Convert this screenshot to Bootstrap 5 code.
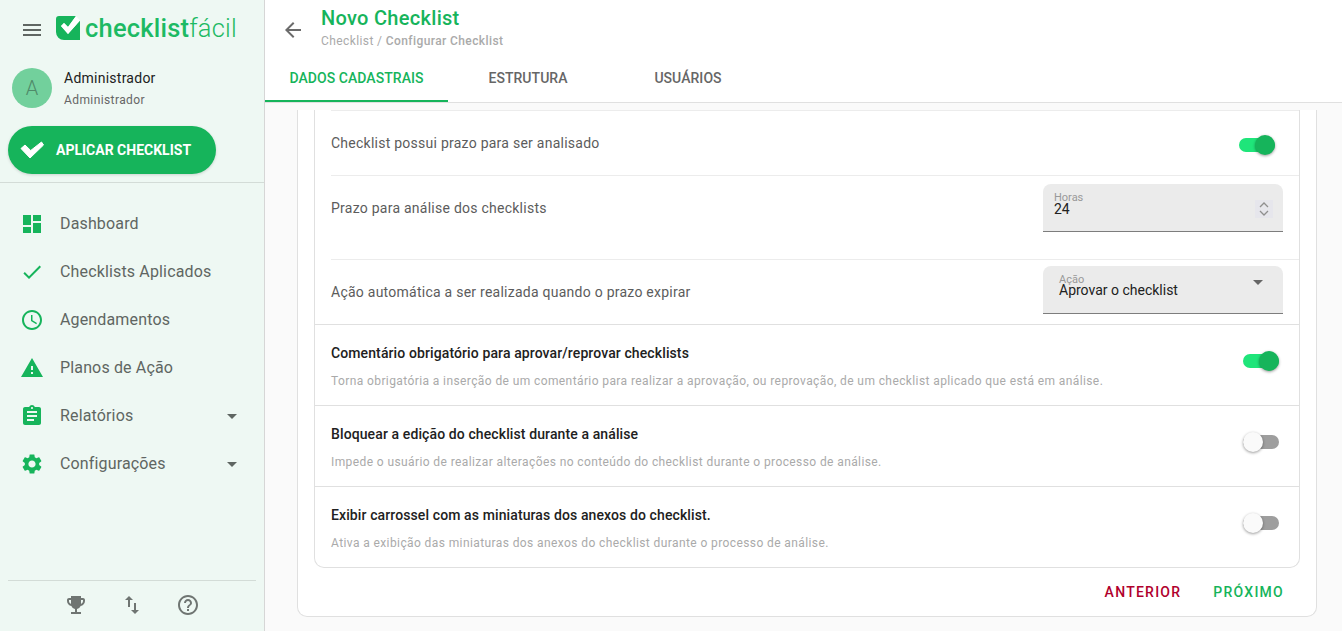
<!DOCTYPE html>
<html lang="pt-BR">
<head>
    <meta charset="UTF-8">
    <meta name="viewport" content="width=device-width, initial-scale=1.0">
    <title>Novo Checklist</title>
    <link href="https://cdn.jsdelivr.net/npm/bootstrap@5.3.0/dist/css/bootstrap.min.css" rel="stylesheet">
    <style>
        html, body { height: 100%; }
        body { font-family: Roboto, "Liberation Sans", sans-serif; background: #fafafa; color: #212121; overflow: hidden; }
        svg { fill: currentColor; flex-shrink: 0; display: block; }

        .app-shell { height: 631px; }
        .side-panel { width: 265px; background: #eef8f3; border-right: 1px solid #d6d6d6; }
        .side-top { height: 60px; padding: 0 0 0 20px; gap: 12px; color: #5f6662; }
        .brand-icon { color: #16b45b; margin-bottom: 4px; }
        .brand-name { font-size: 25.5px; line-height: 30px; color: #1dba63; font-weight: 500; letter-spacing: .2px; margin-left: -7px; margin-bottom: 4px; }
        .brand-name span { font-weight: 300; }
        .user-box { padding: 8px 12px 0; gap: 12px; height: 58px; }
        .user-pic { width: 40px; height: 40px; border-radius: 50%; background: #72d09c; color: #4f8a69; font-size: 20px; font-weight: 300; }
        .user-name { font-size: 14px; line-height: 20px; letter-spacing: .25px; }
        .user-role { font-size: 12px; line-height: 16px; letter-spacing: .4px; color: #666; margin-top: 4px; }
        .apply-btn { width: 208px; height: 48px; margin: 8px 0 8px 8px; border-radius: 24px; background: #16b45b; color: #fff; border: 0; font-size: 14px; font-weight: 700; gap: 12px; padding: 0 0 0 12px; box-shadow: 0 1px 3px rgba(0,0,0,.15); letter-spacing: 0; }
        .apply-btn:hover { background: #16b45b; color: #fff; }
        .side-sep { border-top: 1px solid #d3dcd7; }
        .side-menu { padding-top: 17px; }
        .side-menu .nav-link { height: 48px; padding: 0 20px 0 20px; gap: 16px; color: #5f6662; font-size: 16px; letter-spacing: .15px; }
        .side-menu svg { color: #16b45b; }
        .side-menu svg.menu-caret { color: #5f6662; margin-left: auto; }
        .side-foot { margin: 0 8px; height: 51px; border-top: 1px solid #d3dcd7; color: #6f7572; padding-top: 12px; gap: 32px; }

        .top-area { background: #fff; height: 103px; border-bottom: 1px solid #e0e0e0; }
        .title-bar { height: 60px; }
        .back-link { width: 56px; padding-left: 16px; color: #6b6b6b; }
        .page-title { font-size: 20px; line-height: 24px; font-weight: 500; color: #16b45b; margin: 0; padding-top: 6px; letter-spacing: .3px; }
        .crumbs { font-size: 12px; line-height: 16px; color: #aaa; margin-top: 3px; letter-spacing: .4px; }
        .crumbs b { font-weight: 500; }
        .tab-row { border: 0; height: 42px; }
        .tab-row .nav-link { width: 160px; height: 42px; border: 0; border-radius: 0; margin: 0; padding: 0; color: #666; font-size: 14px; font-weight: 500; letter-spacing: .05px; line-height: 36px; text-align: center; background: none; }
        .tab-row .nav-link.active { width: 183px; color: #16b45b; border-bottom: 2px solid #16b45b; background: none; }

        .work-area { min-height: 0; padding: 0 25px 14px 32px; overflow: hidden; }
        .outer-box { border: 1px solid #e0e0e0; border-top: 0; border-radius: 0 0 10px 10px; background: #fff; padding: 0 16px 0; }
        .inner-box { border: 1px solid #e0e0e0; border-top: 0; border-radius: 0 0 10px 10px; }
        .sub-row { margin-left: 16px; padding: 0 16px 0 0; border-top: 1px solid #ececec; color: #5c5c5c; font-size: 14px; letter-spacing: .25px; }
        .sub-a { height: 65px; padding-right: 24px; }
        .sub-a .toggle-box { top: 2px; }
        .sub-b { height: 84px; padding-top: 8px; }
        .sub-c { height: 65px; padding-top: 6px; }
        .big-row { height: 81px; padding: 0 20px 0 16px; border-top: 1px solid #e0e0e0; }
        .big-row .toggle-box { top: -4px; }
        .row-name { font-size: 14px; line-height: 20px; font-weight: 500; letter-spacing: .11px; padding-top: 18px; }
        .row-hint { font-size: 12px; line-height: 16px; color: #aaa; letter-spacing: .4px; margin-top: 10px; }

        .toggle-box { width: 36px; height: 20px; position: relative; }
        .toggle-box i { position: absolute; left: 0; top: 3px; width: 36px; height: 14px; border-radius: 7px; background: #9e9e9e; }
        .toggle-box b { position: absolute; left: 0; top: 0; width: 20px; height: 20px; border-radius: 50%; background: #fafafa; box-shadow: 0 1px 3px rgba(0,0,0,.4); }
        .toggle-box.is-on i { background: #1fe57a; }
        .toggle-box.is-on b { left: 16px; background: #16b45b; }

        .field-box { width: 240px; height: 48px; background: #ebebeb; border-radius: 8px 8px 0 0; border-bottom: 1px solid #7d7d7d; position: relative; color: #212121; font-size: 14px; letter-spacing: 0; }
        .field-hint { position: absolute; color: #999; font-size: 11px; line-height: 12px; letter-spacing: 0; }
        .field-val { position: absolute; line-height: 16px; }
        .spin-mark { position: absolute; left: 212px; top: 16px; width: 18px; height: 18px; background: #e6e6ec; color: #8f8f8f; }
        .select-caret { position: absolute; right: 13px; top: 4px; color: #666; }
        .label-b { margin-top: 14px; }
        .label-c { margin-top: 16px; }

        .foot-btns { height: 48px; gap: 16px; padding: 0 8px 0 0; }
        .foot-btns .btn { padding: 0 8px; border: 0; font-size: 14px; font-weight: 500; letter-spacing: 1.25px; }
        .btn-back-step { color: #b0002c; }
        .btn-next-step { color: #16b45b; }
    </style>
</head>
<body>
    <div class="app-shell d-flex">
        <!-- menu lateral -->
        <aside class="side-panel d-flex flex-column flex-shrink-0">
            <div class="side-top d-flex align-items-center">
                <svg width="24" height="24" viewBox="0 0 24 24"><path d="M3 18h18v-2H3v2zm0-5h18v-2H3v2zm0-7v2h18V6H3z"/></svg>
                <svg class="brand-icon" width="24" height="24" viewBox="0 0 24 24"><path d="M3 0H20L12 11 8 7 5 10l7 8L24 4.500V24H8a8 8 0 0 1-8-8V3a3 3 0 0 1 3-3z"/><path fill="#fff" d="M5 10l3-3 4 4 8-11 4 4.500L12 18z"/></svg>
                <div class="brand-name">checklist<span>fácil</span></div>
            </div>
            <div class="user-box d-flex">
                <div class="user-pic d-flex align-items-center justify-content-center">A</div>
                <div>
                    <div class="user-name">Administrador</div>
                    <div class="user-role">Administrador</div>
                </div>
            </div>
            <a href="#" class="btn apply-btn d-flex align-items-center">
                <svg width="24" height="18" viewBox="0 0 24 18"><path stroke="#fff" stroke-linejoin="round" d="M1 7.500l4-3.500 5.700 5.500L21.500 1l2 3L10 17z"/></svg>
                APLICAR CHECKLIST
            </a>
            <div class="side-sep"></div>
            <nav class="nav flex-column side-menu flex-grow-1">
                <a class="nav-link d-flex align-items-center" href="#"><svg width="24" height="24" viewBox="0 0 24 24"><path d="M3 13h8V3H3v10zm0 8h8v-6H3v6zm10 0h8V11h-8v10zm0-18v6h8V3h-8z"/></svg>Dashboard</a>
                <a class="nav-link d-flex align-items-center" href="#"><svg width="24" height="24" viewBox="0 0 24 24"><path d="M9 16.170L4.830 12l-1.420 1.410L9 19 21 7l-1.410-1.410z"/></svg>Checklists Aplicados</a>
                <a class="nav-link d-flex align-items-center" href="#"><svg width="24" height="24" viewBox="0 0 24 24"><path d="M11.990 2C6.470 2 2 6.480 2 12s4.470 10 9.990 10C17.520 22 22 17.520 22 12S17.520 2 11.990 2zM12 20c-4.420 0-8-3.580-8-8s3.580-8 8-8 8 3.580 8 8-3.580 8-8 8zm.5-13H11v6l5.250 3.150.75-1.230-4.500-2.670z"/></svg>Agendamentos</a>
                <a class="nav-link d-flex align-items-center" href="#"><svg width="24" height="24" viewBox="0 0 24 24"><path d="M1 21h22L12 2 1 21zm12-3h-2v-2h2v2zm0-4h-2v-4h2v4z"/></svg>Planos de Ação</a>
                <a class="nav-link d-flex align-items-center" href="#"><svg width="24" height="24" viewBox="0 0 24 24"><path d="M19 3h-4.180C14.400 1.840 13.300 1 12 1c-1.300 0-2.400.84-2.820 2H5c-1.100 0-2 .9-2 2v14c0 1.100.9 2 2 2h14c1.100 0 2-.9 2-2V5c0-1.100-.9-2-2-2zm-7 0c.55 0 1 .45 1 1s-.45 1-1 1-1-.45-1-1 .45-1 1-1zm2 14H7v-2h7v2zm3-4H7v-2h10v2zm0-4H7V7h10v2z"/></svg>Relatórios<svg class="menu-caret" width="24" height="24" viewBox="0 0 24 24"><path d="M7 10l5 5 5-5z"/></svg></a>
                <a class="nav-link d-flex align-items-center" href="#"><svg width="24" height="24" viewBox="0 0 24 24"><path d="M19.140 12.940c.04-.3.06-.61.06-.94 0-.32-.02-.64-.07-.94l2.030-1.580c.18-.14.23-.41.12-.61l-1.920-3.320c-.12-.22-.37-.29-.59-.22l-2.390.96c-.5-.38-1.030-.7-1.620-.94l-.36-2.540c-.04-.24-.24-.41-.48-.41h-3.840c-.24 0-.43.17-.47.41l-.36 2.540c-.59.24-1.130.57-1.620.94l-2.390-.96c-.22-.08-.47 0-.59.22L2.740 8.870c-.12.21-.08.47.12.61l2.030 1.580c-.05.3-.09.63-.09.94s.02.64.07.94l-2.030 1.580c-.18.14-.23.41-.12.61l1.920 3.320c.12.22.37.29.59.22l2.390-.96c.5.38 1.030.7 1.620.94l.36 2.540c.05.24.24.41.48.41h3.840c.24 0 .44-.17.47-.41l.36-2.540c.59-.24 1.130-.56 1.620-.94l2.390.96c.22.08.47 0 .59-.22l1.920-3.320c.12-.22.07-.47-.12-.61l-2.010-1.580zM12 15.600c-1.980 0-3.600-1.620-3.600-3.600s1.620-3.600 3.600-3.600 3.600 1.620 3.600 3.600-1.620 3.600-3.600 3.600z"/></svg>Configurações<svg class="menu-caret" width="24" height="24" viewBox="0 0 24 24"><path d="M7 10l5 5 5-5z"/></svg></a>
            </nav>
            <div class="side-foot d-flex justify-content-center">
                <svg width="24" height="24" viewBox="0 0 24 24"><path d="M19 5h-2V3H7v2H5c-1.100 0-2 .9-2 2v1c0 2.550 1.920 4.630 4.390 4.940.63 1.500 1.980 2.630 3.610 2.960V19H7v2h10v-2h-4v-3.100c1.630-.33 2.980-1.460 3.610-2.960C19.080 12.630 21 10.550 21 8V7c0-1.100-.9-2-2-2zM5 8V7h2v3.820C5.840 10.400 5 9.300 5 8zm14 0c0 1.300-.84 2.400-2 2.820V7h2v1z"/></svg>
                <svg width="24" height="24" viewBox="0 0 24 24"><path d="M16 17.010V10h-2v7.010h-3L15 21l4-3.990h-3zM9 3L5 6.990h3V14h2V6.990h3L9 3z"/></svg>
                <svg width="24" height="24" viewBox="0 0 24 24"><path d="M11 18h2v-2h-2v2zm1-16C6.480 2 2 6.480 2 12s4.480 10 10 10 10-4.480 10-10S17.520 2 12 2zm0 18c-4.410 0-8-3.590-8-8s3.590-8 8-8 8 3.590 8 8-3.590 8-8 8zm0-14c-2.210 0-4 1.790-4 4h2c0-1.100.9-2 2-2s2 .9 2 2c0 2-3 1.750-3 5h2c0-2.250 3-2.500 3-5 0-2.210-1.790-4-4-4z"/></svg>
            </div>
        </aside>

        <main class="d-flex flex-column flex-grow-1" style="min-width:0">
            <header class="top-area flex-shrink-0">
                <div class="title-bar d-flex">
                    <a href="#" class="back-link d-flex align-items-center"><svg width="24" height="24" viewBox="0 0 24 24"><path d="M20 11H7.830l5.590-5.590L12 4l-8 8 8 8 1.410-1.410L7.830 13H20v-2z"/></svg></a>
                    <div>
                        <h1 class="page-title">Novo Checklist</h1>
                        <div class="crumbs">Checklist / <b>Configurar Checklist</b></div>
                    </div>
                </div>
                <ul class="nav nav-tabs tab-row">
                    <li class="nav-item"><a class="nav-link active" href="#">DADOS CADASTRAIS</a></li>
                    <li class="nav-item"><a class="nav-link" href="#">ESTRUTURA</a></li>
                    <li class="nav-item"><a class="nav-link" href="#">USUÁRIOS</a></li>
                </ul>
            </header>

            <section class="work-area flex-grow-1 d-flex flex-column justify-content-end">
                <div class="outer-box">
                    <div class="inner-box">
                        <div class="sub-row sub-a d-flex align-items-center justify-content-between">
                            <span>Checklist possui prazo para ser analisado</span>
                            <div class="toggle-box is-on"><i></i><b></b></div>
                        </div>
                        <div class="sub-row sub-b d-flex justify-content-between">
                            <span class="label-b">Prazo para análise dos checklists</span>
                            <div class="field-box">
                                <span class="field-hint" style="left:11px;top:8px">Horas</span>
                                <span class="field-val" style="left:11px;top:17px">24</span>
                                <span class="spin-mark d-flex align-items-center justify-content-center">
                                    <svg width="12" height="16" viewBox="0 0 12 16" style="fill:none;stroke:currentColor;stroke-width:1.300"><path d="M2 6l4-4 4 4M2 10l4 4 4-4"/></svg>
                                </span>
                            </div>
                        </div>
                        <div class="sub-row sub-c d-flex justify-content-between">
                            <span class="label-c">Ação automática a ser realizada quando o prazo expirar</span>
                            <div class="field-box">
                                <span class="field-hint" style="left:16px;top:8px">Ação</span>
                                <span class="field-val" style="left:16px;top:16px">Aprovar o checklist</span>
                                <svg class="select-caret" width="24" height="24" viewBox="0 0 24 24"><path d="M7 10l5 5 5-5z"/></svg>
                            </div>
                        </div>
                        <div class="big-row d-flex justify-content-between align-items-center">
                            <div class="align-self-start">
                                <div class="row-name">Comentário obrigatório para aprovar/reprovar checklists</div>
                                <div class="row-hint">Torna obrigatória a inserção de um comentário para realizar a aprovação, ou reprovação, de um checklist aplicado que está em análise.</div>
                            </div>
                            <div class="toggle-box is-on"><i></i><b></b></div>
                        </div>
                        <div class="big-row d-flex justify-content-between align-items-center">
                            <div class="align-self-start">
                                <div class="row-name">Bloquear a edição do checklist durante a análise</div>
                                <div class="row-hint">Impede o usuário de realizar alterações no conteúdo do checklist durante o processo de análise.</div>
                            </div>
                            <div class="toggle-box"><i></i><b></b></div>
                        </div>
                        <div class="big-row d-flex justify-content-between align-items-center">
                            <div class="align-self-start">
                                <div class="row-name">Exibir carrossel com as miniaturas dos anexos do checklist.</div>
                                <div class="row-hint">Ativa a exibição das miniaturas dos anexos do checklist durante o processo de análise.</div>
                            </div>
                            <div class="toggle-box"><i></i><b></b></div>
                        </div>
                    </div>
                    <div class="foot-btns d-flex justify-content-end align-items-center">
                        <a href="#" class="btn btn-back-step">ANTERIOR</a>
                        <a href="#" class="btn btn-next-step">PRÓXIMO</a>
                    </div>
                </div>
            </section>
        </main>
    </div>
    <script src="https://cdn.jsdelivr.net/npm/bootstrap@5.3.0/dist/js/bootstrap.bundle.min.js"></script>
</body>
</html>
